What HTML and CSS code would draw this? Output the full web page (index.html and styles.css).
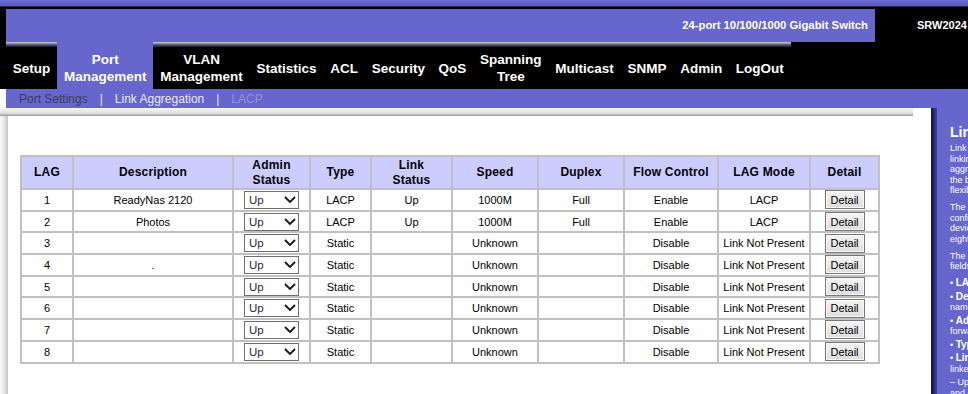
FILE: index.html
```html
<!DOCTYPE html>
<html lang="en">
<head>
<meta charset="utf-8">
<title>Link Aggregation</title>
<link rel="stylesheet" href="styles.css">
</head>
<body>
<div class="page">
  <div class="topstrip"></div>
  <header class="head">
    <div class="brand">
      <div class="brand-title">24-port 10/100/1000 Gigabit Switch</div>
      <div class="brand-model">SRW2024</div>
    </div>
    <nav class="nav">
      <ul class="nav-list">
        <li class="nav-item">Setup</li>
        <li class="nav-item active">Port<br>Management</li>
        <li class="nav-item">VLAN<br>Management</li>
        <li class="nav-item">Statistics</li>
        <li class="nav-item">ACL</li>
        <li class="nav-item">Security</li>
        <li class="nav-item">QoS</li>
        <li class="nav-item">Spanning<br>Tree</li>
        <li class="nav-item">Multicast</li>
        <li class="nav-item">SNMP</li>
        <li class="nav-item">Admin</li>
        <li class="nav-item">LogOut</li>
      </ul>
    </nav>
  </header>
  <div class="subnav">
    <span class="sub-link sub-dim">Port Settings</span><span class="sep">|</span><span class="sub-link sub-current">Link Aggregation</span><span class="sep">|</span><span class="sub-link sub-lacp">LACP</span>
  </div>
  <div class="main">
    <div class="frame">
      <table class="lag">
        <colgroup>
          <col class="w-lag"><col class="w-desc"><col class="w-admin"><col class="w-type"><col class="w-link"><col class="w-speed"><col class="w-duplex"><col class="w-flow"><col class="w-mode"><col class="w-detail">
        </colgroup>
        <thead>
          <tr>
            <th>LAG</th><th>Description</th><th>Admin<br>Status</th><th>Type</th><th>Link<br>Status</th><th>Speed</th><th>Duplex</th><th>Flow Control</th><th>LAG Mode</th><th>Detail</th>
          </tr>
        </thead>
        <tbody>
          <tr><td>1</td><td>ReadyNas 2120</td><td><span class="sel"><select><option>Up</option><option>Down</option></select><svg class="chev" width="12" height="7" viewBox="0 0 12 7"><polyline points="1,1 6,6 11,1" fill="none" stroke="#1a1a1a" stroke-width="1.9"/></svg></span></td><td>LACP</td><td>Up</td><td>1000M</td><td>Full</td><td>Enable</td><td>LACP</td><td><button class="btn">Detail</button></td></tr>
          <tr><td>2</td><td>Photos</td><td><span class="sel"><select><option>Up</option><option>Down</option></select><svg class="chev" width="12" height="7" viewBox="0 0 12 7"><polyline points="1,1 6,6 11,1" fill="none" stroke="#1a1a1a" stroke-width="1.9"/></svg></span></td><td>LACP</td><td>Up</td><td>1000M</td><td>Full</td><td>Enable</td><td>LACP</td><td><button class="btn">Detail</button></td></tr>
          <tr><td>3</td><td></td><td><span class="sel"><select><option>Up</option><option>Down</option></select><svg class="chev" width="12" height="7" viewBox="0 0 12 7"><polyline points="1,1 6,6 11,1" fill="none" stroke="#1a1a1a" stroke-width="1.9"/></svg></span></td><td>Static</td><td></td><td>Unknown</td><td></td><td>Disable</td><td>Link Not Present</td><td><button class="btn">Detail</button></td></tr>
          <tr><td>4</td><td>.</td><td><span class="sel"><select><option>Up</option><option>Down</option></select><svg class="chev" width="12" height="7" viewBox="0 0 12 7"><polyline points="1,1 6,6 11,1" fill="none" stroke="#1a1a1a" stroke-width="1.9"/></svg></span></td><td>Static</td><td></td><td>Unknown</td><td></td><td>Disable</td><td>Link Not Present</td><td><button class="btn">Detail</button></td></tr>
          <tr><td>5</td><td></td><td><span class="sel"><select><option>Up</option><option>Down</option></select><svg class="chev" width="12" height="7" viewBox="0 0 12 7"><polyline points="1,1 6,6 11,1" fill="none" stroke="#1a1a1a" stroke-width="1.9"/></svg></span></td><td>Static</td><td></td><td>Unknown</td><td></td><td>Disable</td><td>Link Not Present</td><td><button class="btn">Detail</button></td></tr>
          <tr><td>6</td><td></td><td><span class="sel"><select><option>Up</option><option>Down</option></select><svg class="chev" width="12" height="7" viewBox="0 0 12 7"><polyline points="1,1 6,6 11,1" fill="none" stroke="#1a1a1a" stroke-width="1.9"/></svg></span></td><td>Static</td><td></td><td>Unknown</td><td></td><td>Disable</td><td>Link Not Present</td><td><button class="btn">Detail</button></td></tr>
          <tr><td>7</td><td></td><td><span class="sel"><select><option>Up</option><option>Down</option></select><svg class="chev" width="12" height="7" viewBox="0 0 12 7"><polyline points="1,1 6,6 11,1" fill="none" stroke="#1a1a1a" stroke-width="1.9"/></svg></span></td><td>Static</td><td></td><td>Unknown</td><td></td><td>Disable</td><td>Link Not Present</td><td><button class="btn">Detail</button></td></tr>
          <tr><td>8</td><td></td><td><span class="sel"><select><option>Up</option><option>Down</option></select><svg class="chev" width="12" height="7" viewBox="0 0 12 7"><polyline points="1,1 6,6 11,1" fill="none" stroke="#1a1a1a" stroke-width="1.9"/></svg></span></td><td>Static</td><td></td><td>Unknown</td><td></td><td>Disable</td><td>Link Not Present</td><td><button class="btn">Detail</button></td></tr>
        </tbody>
      </table>
    </div>
    <aside class="help">
      <h2 class="help-title">Link Aggregation</h2>
      <p class="help-p">Link Aggregation optimizes port usage by<br>linking a group of ports together to form a single<br>aggregated link (LAG). Aggregated links multiply<br>the bandwidth between the devices, increase port<br>flexibility, and provide link redundancy.</p>
      <p class="help-p">The device supports up to eight ports per LAG,<br>configured either statically or dynamically (LACP). The<br>device supports a maximum of<br>eight LAGs.</p>
      <p class="help-p">The Link Aggregation page contains the following<br>fields:</p>
      <p class="help-b">• <b>LAG</b> — The LAG number.</p>
      <p class="help-b">• <b>Description</b> — User-defined LAG<br>name.</p>
      <p class="help-b">• <b>Admin Status</b> — Enables traffic<br>forwarding through the LAG.</p>
      <p class="help-b">• <b>Type</b> — The LAG type.</p>
      <p class="help-b">• <b>Link Status</b> — Indicates whether the LAG is<br>linked:</p>
      <p class="help-b help-sub">– Up — The LAG is linked<br>and operating.</p>
    </aside>
  </div>
</div>
</body>
</html>
```
FILE: styles.css
```css
html, body {
  margin: 0;
  padding: 0;
  background: #fff;
}
body {
  width: 968px;
  height: 394px;
  overflow: hidden;
  font-family: "Liberation Sans", Arial, sans-serif;
}
.page {
  width: 968px;
  height: 394px;
  display: flex;
  flex-direction: column;
  overflow: hidden;
}
.topstrip {
  height: 6px;
  flex-shrink: 0;
  background: linear-gradient(to bottom, #6c6cd2, #5a5abc);
  border-bottom: 1px solid #2a2a55;
}
.head {
  background: #000;
  padding-left: 6px;
  flex-shrink: 0;
}
.brand {
  display: flex;
  padding-top: 2px;
  height: 33px;
}
.brand-title {
  width: 869px;
  flex-shrink: 0;
  background: #6666cc;
  color: #fff;
  font-weight: bold;
  font-size: 11.3px;
  line-height: 33px;
  text-align: right;
  padding-right: 7px;
  box-sizing: border-box;
}
.brand-model {
  flex: 1;
  color: #fff;
  font-weight: bold;
  font-size: 11px;
  line-height: 33px;
  padding-left: 42px;
  white-space: nowrap;
}
.nav {
  height: 47px;
}
.nav-list {
  list-style: none;
  margin: 0;
  padding: 0;
  display: inline-flex;
  height: 47px;
  background: linear-gradient(to bottom, #d2d2d8 0, #a6a6b0 1px, #74748a 2px, #40405a 3.5px, #16162a 5px, #000 5px, #000 100%);
}
.nav-item {
  box-sizing: border-box;
  height: 47px;
  padding: 5px 6.85px 0;
  display: flex;
  align-items: center;
  justify-content: center;
  text-align: center;
  color: #fff;
  font-weight: bold;
  font-size: 13.5px;
  line-height: 17px;
  white-space: nowrap;
}
.nav-item.active {
  background: #6666cc;
}
.subnav {
  flex-shrink: 0;
  margin-left: 6px;
  height: 19px;
  overflow: hidden;
  background: #6666cc;
  padding-left: 13px;
  font-size: 12px;
  line-height: 21px;
  white-space: nowrap;
}
.sub-dim { color: #3c3c5c; }
.sub-current { color: #e8e8ff; }
.sub-lacp { color: #9494cc; }
.sep {
  color: #e6e6f6;
  margin: 0 12px;
}
.main {
  flex: 1;
  display: flex;
  min-height: 0;
}
.frame {
  width: 931px;
  flex-shrink: 0;
  box-sizing: border-box;
  padding: 47px 0 0 20px;
  background:
    linear-gradient(to bottom, #f4f4f4 0, #e6e6e6 4px, #d2d2d2 6px, #a8a8a8 7px, #a0a0a0 8px) 0 0 / 913px 8px no-repeat,
    linear-gradient(to right, #fbfbfb 0, #ececec 3px, #d6d6d6 6px, #c4c4c4 8px) 0 0 / 8px 100% no-repeat,
    #fff;
}
.lag {
  border-collapse: separate;
  border-spacing: 2px;
  background: #c0c0c0;
  table-layout: fixed;
  width: 860px;
  font-size: 11px;
  color: #000;
}
.w-lag { width: 50px; }
.w-desc { width: 158px; }
.w-admin { width: 75px; }
.w-type { width: 59px; }
.w-link { width: 79px; }
.w-speed { width: 84px; }
.w-duplex { width: 84px; }
.w-flow { width: 92px; }
.w-mode { width: 90px; }
.w-detail { width: 67px; }
.lag th {
  background: #ccccff;
  font-size: 12px;
  letter-spacing: 0.2px;
  font-weight: bold;
  line-height: 15px;
  height: 31px;
  padding: 0;
  text-align: center;
  vertical-align: middle;
}
.lag td {
  background: #fff;
  height: 19.7px;
  padding: 0;
  text-align: center;
  vertical-align: middle;
  white-space: nowrap;
  line-height: 14px;
}
.sel {
  position: relative;
  display: inline-block;
  width: 55px;
  height: 18px;
  vertical-align: middle;
}
.sel select {
  -webkit-appearance: none;
  appearance: none;
  width: 55px;
  height: 18px;
  margin: 0;
  border: 1px solid #6e6e6e;
  border-radius: 0;
  background: #fff;
  color: #2a2240;
  font-family: "Liberation Sans", Arial, sans-serif;
  font-size: 11.5px;
  padding: 0 0 0 4px;
  box-sizing: border-box;
  display: block;
}
.chev {
  position: absolute;
  right: 3px;
  top: 5px;
  pointer-events: none;
}
.btn {
  width: 40px;
  height: 19px;
  margin: 0;
  padding: 0;
  border: 1px solid #777;
  border-radius: 0;
  box-shadow: inset 0 0 0 1px #fafafa;
  background: linear-gradient(to bottom, #f4f4f4, #dedede);
  font-family: "Liberation Sans", Arial, sans-serif;
  font-size: 11px;
  color: #000;
  vertical-align: middle;
}
.help {
  width: 320px;
  flex-shrink: 0;
  box-sizing: border-box;
  padding: 16px 0 0 19px;
  color: #fff;
  background:
    linear-gradient(to right, #151540 0, #1e1e52 2px, #2e2e7a 3px, #3e3e9a 6px) 0 0 / 6px 100% no-repeat,
    #6666cc;
  white-space: nowrap;
}
.help-title {
  margin: 0 0 3px;
  font-size: 14px;
  line-height: 16px;
  font-weight: bold;
}
.help-p {
  margin: 0 0 6.5px;
  font-size: 9px;
  line-height: 10.5px;
}
.help-b {
  margin: 0 0 3px;
  font-size: 9px;
  line-height: 10.5px;
}
.help-b b {
  font-size: 10px;
}
.help-sub {
  margin-top: 3px;
}
```
